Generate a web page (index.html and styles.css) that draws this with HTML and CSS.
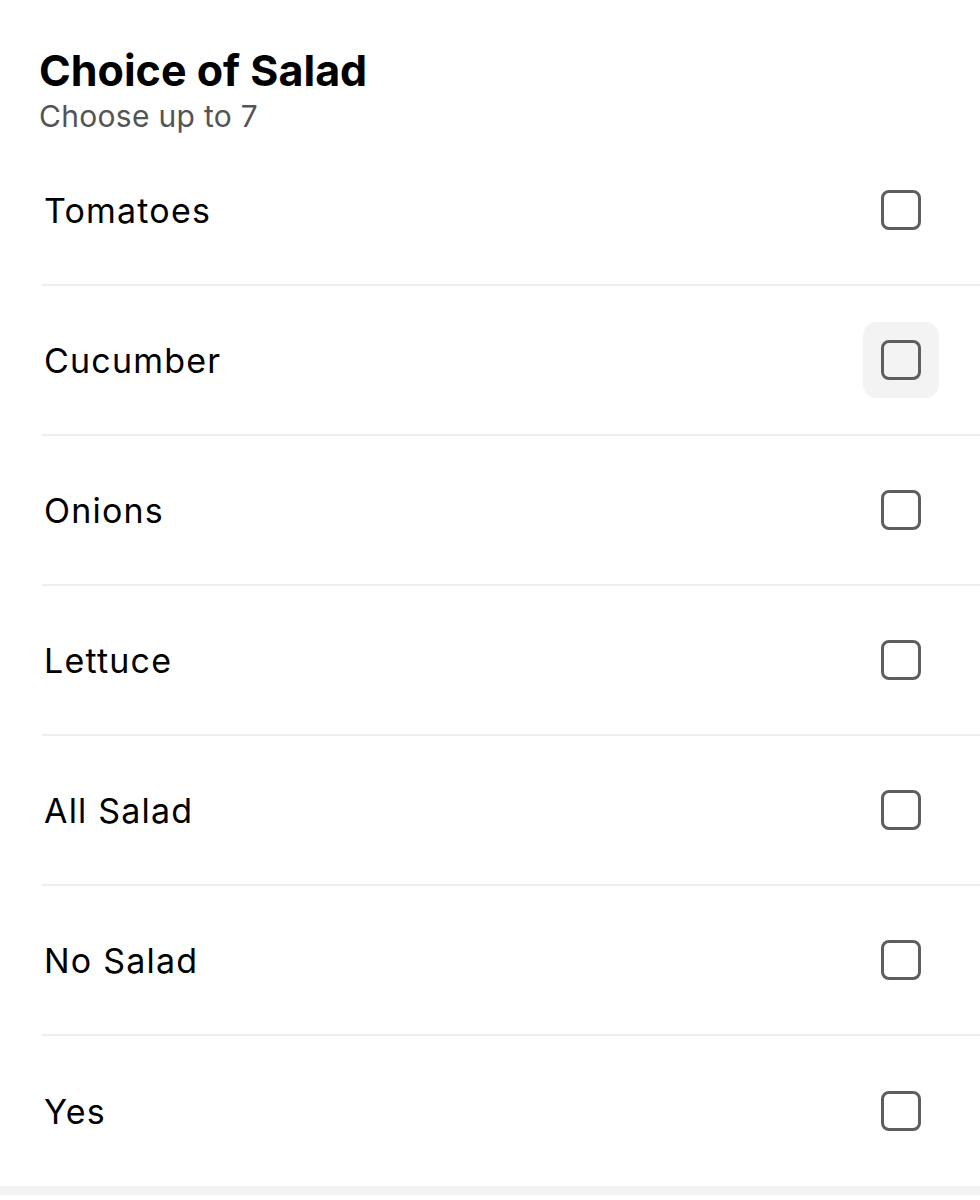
FILE: index.html
```html
<!DOCTYPE html>
<html lang="en">
<head>
    <meta charset="UTF-8">
    <meta name="viewport" content="width=device-width, initial-scale=1.0">
    <title>Choice of Salad</title>
    <link rel="stylesheet" href="styles.css">
</head>
<body>
    <div class="group">
        <div class="group-header">
            <h2>Choice of Salad</h2>
            <div class="hint">Choose up to 7</div>
        </div>

        <ul class="options">
            <li class="option">
                <span class="label">Tomatoes</span>
                <span class="check-wrap"><span class="check"></span></span>
            </li>
            <li class="option">
                <span class="label">Cucumber</span>
                <span class="check-wrap hover"><span class="check"></span></span>
            </li>
            <li class="option">
                <span class="label">Onions</span>
                <span class="check-wrap"><span class="check"></span></span>
            </li>
            <li class="option">
                <span class="label">Lettuce</span>
                <span class="check-wrap"><span class="check"></span></span>
            </li>
            <li class="option">
                <span class="label">All Salad</span>
                <span class="check-wrap"><span class="check"></span></span>
            </li>
            <li class="option">
                <span class="label">No Salad</span>
                <span class="check-wrap"><span class="check"></span></span>
            </li>
            <li class="option">
                <span class="label">Yes</span>
                <span class="check-wrap"><span class="check"></span></span>
            </li>
        </ul>
    </div>
    <div class="spacer"></div>
</body>
</html>
```

FILE: styles.css
```css
body {
    margin: 0;
    padding: 0;
    background: #fff;
    color: #000;
    font-family: Inter, "Noto Sans", sans-serif;
}
.group-header {
    padding: 44px 0 0 39px;
}
.group-header h2 {
    margin: 0;
    font-size: 43px;
    font-weight: 700;
    line-height: 52px;
}
.hint {
    font-size: 30px;
    line-height: 40px;
    letter-spacing: 0.3px;
    color: #545454;
}
.options {
    list-style: none;
    margin: 0;
    padding: 0 0 0 42px;
}
.option {
    display: flex;
    align-items: center;
    justify-content: space-between;
    height: 150px;
    padding-right: 41px;
    border-bottom: 2px solid #eeeeee;
    box-sizing: border-box;
}
.option:last-child {
    border-bottom: none;
}
.label {
    padding-left: 2px;
    font-size: 34px;
    letter-spacing: 1.2px;
}
.check-wrap {
    display: flex;
    align-items: center;
    justify-content: center;
    width: 76px;
    height: 76px;
    border-radius: 14px;
}
.check-wrap.hover {
    background: #f3f3f3;
}
.check {
    width: 40px;
    height: 40px;
    border: 3px solid #5e5e5e;
    border-radius: 8px;
    box-sizing: border-box;
}
.spacer {
    height: 9px;
    background: #f3f3f3;
}
```
